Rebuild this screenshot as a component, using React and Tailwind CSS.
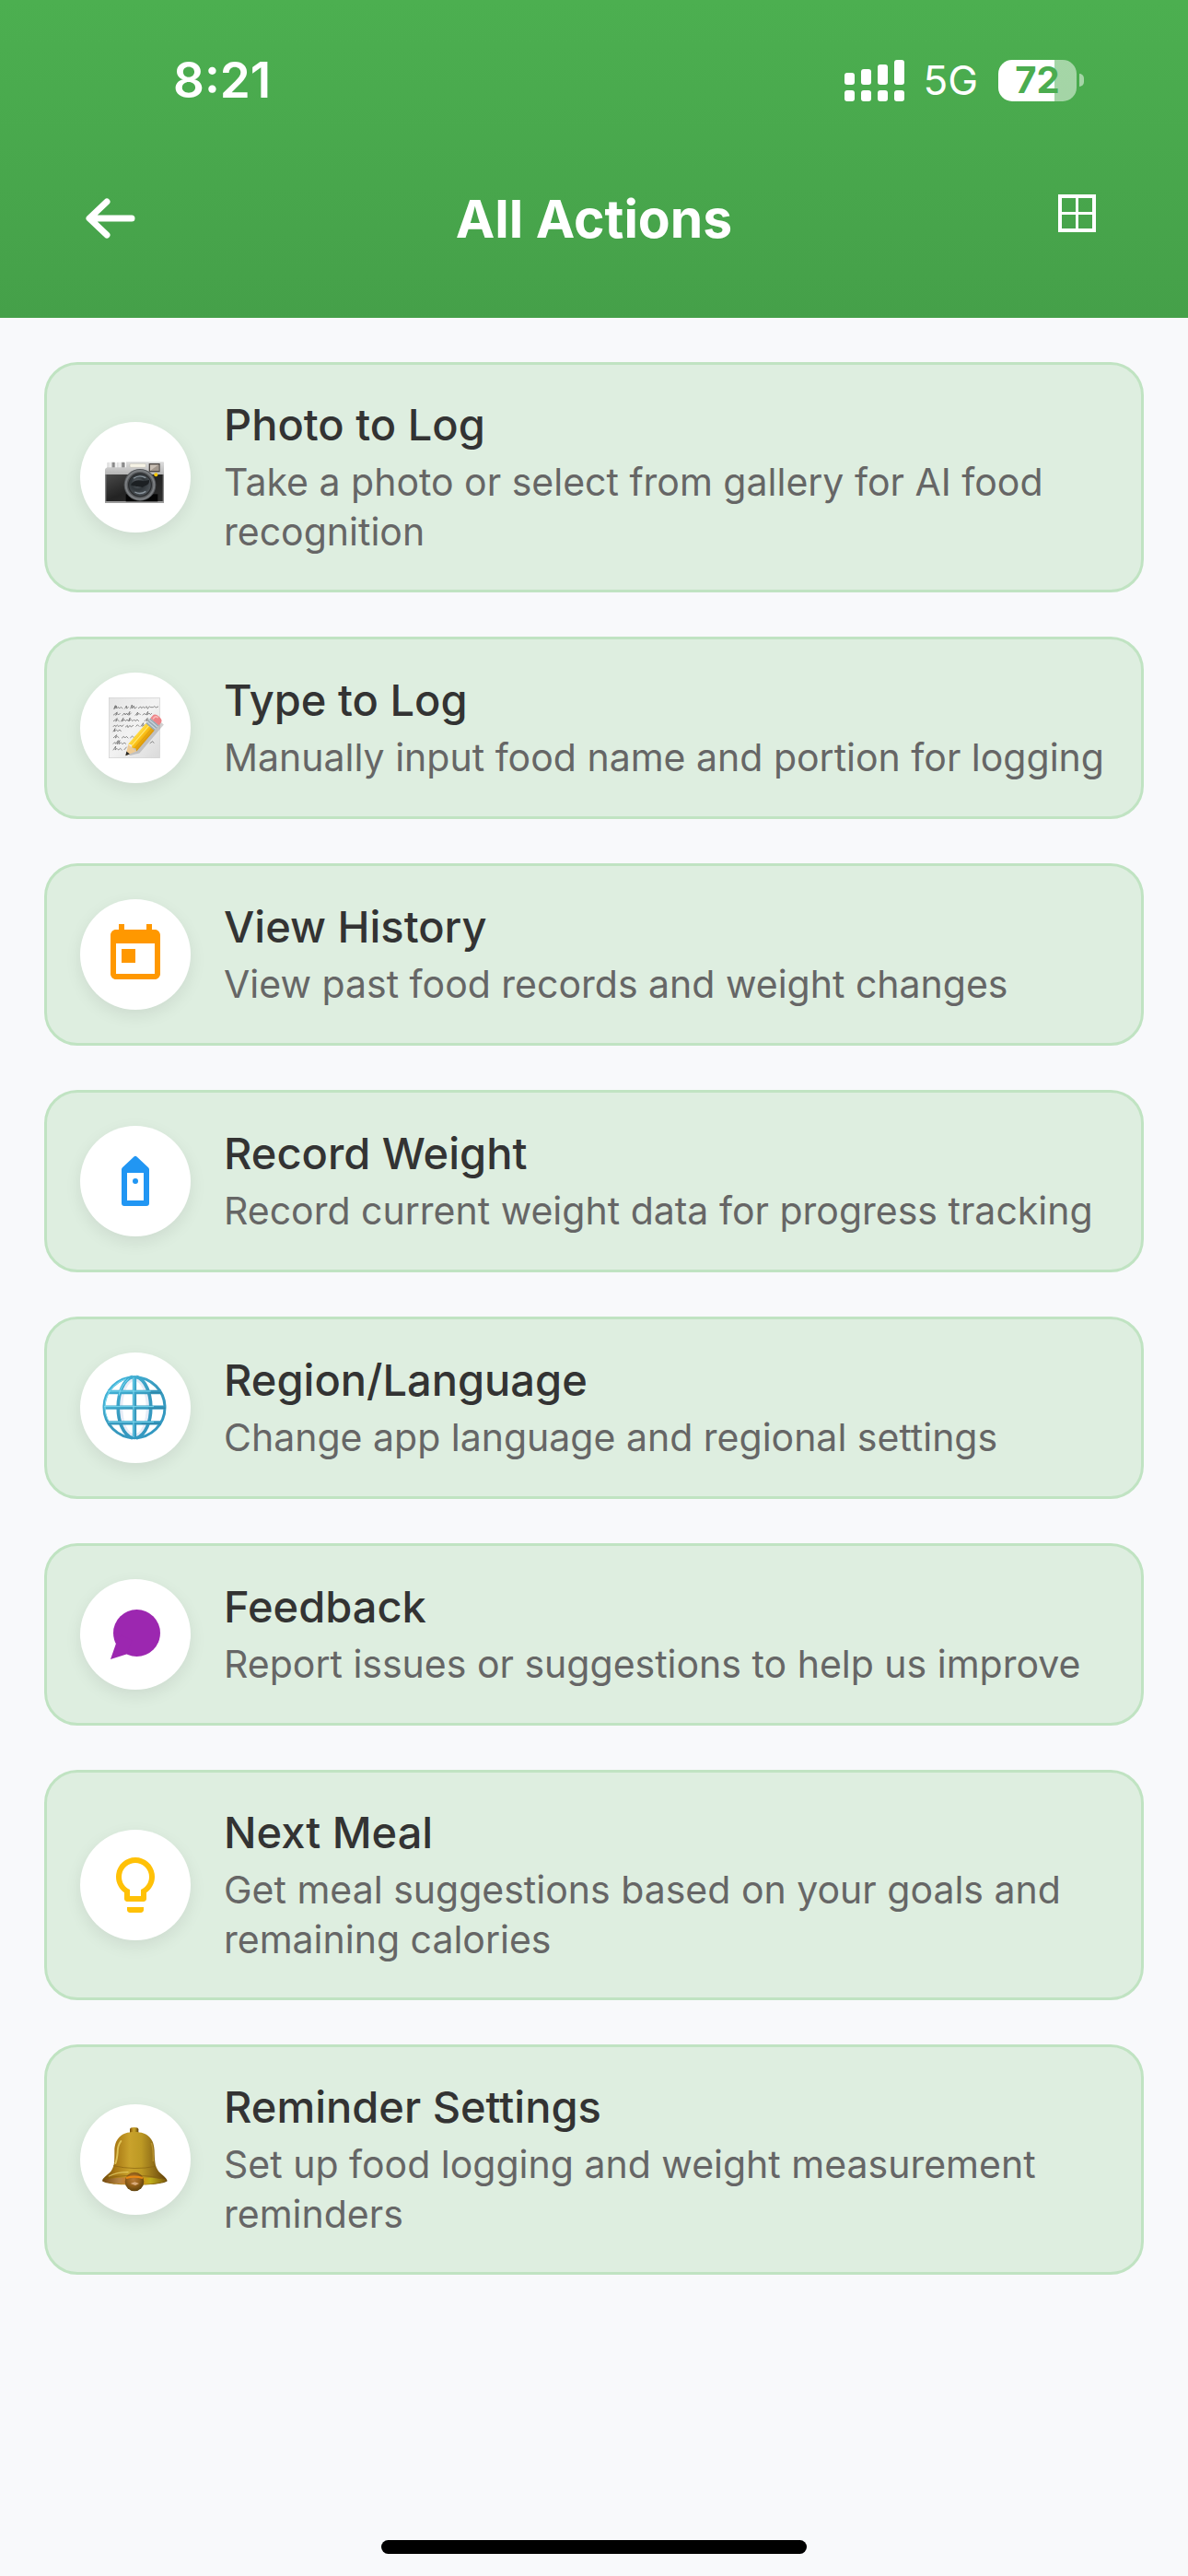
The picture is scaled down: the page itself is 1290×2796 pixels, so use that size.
import React from 'react';

const CameraIcon = () => (
  <svg viewBox="0 0 360 360" className="w-full h-full" aria-hidden="true">
    <defs>
      <linearGradient id="camTop" x1="0" y1="0" x2="0" y2="1">
        <stop offset="0" stopColor="#dcdcdc" />
        <stop offset="1" stopColor="#b4b4b4" />
      </linearGradient>
      <linearGradient id="camKnob" x1="0" y1="0" x2="1" y2="0">
        <stop offset="0" stopColor="#d8d8d8" />
        <stop offset="0.45" stopColor="#f4f4f4" />
        <stop offset="0.75" stopColor="#777" />
        <stop offset="1" stopColor="#c8c8c8" />
      </linearGradient>
      <linearGradient id="camBody" x1="0" y1="0" x2="1" y2="1">
        <stop offset="0" stopColor="#4a4a4a" />
        <stop offset="0.5" stopColor="#232323" />
        <stop offset="1" stopColor="#2f2f2f" />
      </linearGradient>
      <radialGradient id="camLens" cx="0.4" cy="0.4" r="0.6">
        <stop offset="0" stopColor="#6c7278" />
        <stop offset="0.5" stopColor="#30363a" />
        <stop offset="1" stopColor="#4d5358" />
      </radialGradient>
    </defs>
    <rect x="88" y="131" width="27" height="20" rx="3" fill="url(#camKnob)" />
    <rect x="119" y="131" width="28" height="20" rx="3" fill="url(#camKnob)" />
    <path d="M82 152l6-4h62v-18h121q2 0 2 3v40H81v-17z" fill="url(#camTop)" />
    <rect x="81" y="171" width="192" height="88" fill="url(#camBody)" />
    <rect x="81" y="171" width="4" height="92" fill="#858585" />
    <rect x="269" y="171" width="4" height="92" fill="#858585" />
    <rect x="81" y="258" width="192" height="6" fill="#9b9b9b" />
    <rect x="149" y="235" width="104" height="24" fill="#050505" />
    <rect x="162" y="136" width="52" height="12" rx="4" fill="#f6f3e6" stroke="#aaa69a" strokeWidth="1" />
    <rect x="226" y="137" width="32" height="24" fill="#c9bfb5" stroke="#4d4744" strokeWidth="4" />
    <path d="M228 159l28-20v20z" fill="#a2978d" />
    <circle cx="195" cy="205" r="52" fill="#55585b" />
    <circle cx="195" cy="205" r="46" fill="none" stroke="#7b7e81" strokeWidth="6" />
    <circle cx="195" cy="205" r="37" fill="url(#camLens)" stroke="#2b2d2f" strokeWidth="4" />
    <path d="M165 205c8-16 26-18 42-12l18-4c2 16-10 16-22 24-16-4-26 0-38-8z" fill="#1c2023" />
    <path d="M174 184q18-14 40-2M178 228q18 10 36-2" fill="none" stroke="#8b959d" strokeWidth="4" />
    <circle cx="247" cy="172" r="6" fill="#f7c600" />
  </svg>
);

const MemoIcon = () => (
  <svg viewBox="0 0 360 360" className="w-full h-full" aria-hidden="true">
    <defs>
      <linearGradient id="memoPaper" x1="0" y1="0" x2="1" y2="1">
        <stop offset="0" stopColor="#e5e5e5" />
        <stop offset="0.5" stopColor="#f2f2f2" />
        <stop offset="1" stopColor="#dadada" />
      </linearGradient>
      <linearGradient id="memoPencil" x1="0" y1="0" x2="1" y2="0">
        <stop offset="0" stopColor="#ffdc45" />
        <stop offset="0.5" stopColor="#fbbf15" />
        <stop offset="1" stopColor="#d99408" />
      </linearGradient>
    </defs>
    <rect x="94" y="82" width="165" height="196" fill="url(#memoPaper)" stroke="#d0d0d0" strokeWidth="2" />
    <g fill="none" stroke="#5a5a5a" strokeWidth="2" strokeLinecap="round" strokeLinejoin="round">
      <path d="M110 118l5-11-2 11 5-10 1 9 5-5 4 5 5-5 5 5M146 117l5-9 1 9 5-4M164 117l5-12 0 12 6-9 2 9 7-4M190 116l7-5 3 5 6-5 4 5 6-6 4 8 6-8 3 3h9l4-3 5 4 7-3" />
      <path d="M109 138l12-9-5 10 6-5 3 4 5-5M138 139l6-7 3 6 5-6 3 6 7-11-3 12 7-7M180 139l8-10-3 10 7-6 4 4M204 138l6-5 4 5 7-11-3 11 7-6 4 5 4-4" />
      <path d="M109 158l12-9-5 10 6-5 5 4M133 159l8-11-4 11 7-6 4 5 5-5 4 5 6-11-4 11 7-5 5 5 5-5 4 5 6-5 5 5M210 158l10-10-4 10 7-5 4 5" />
      <path d="M108 176l5-5 3 5 5-5 5 5 5-5 4 5 6-5M148 177l6-5 2 7 6-7 4 5 7-5M182 175l5-5 5 5M198 175l8-11-3 11 7-5" />
      <path d="M108 192l6-10-3 10 7-5 5 4 6-5 4 5" />
      <path d="M109 212l10-9-4 10 6-5 5 4M136 213l6-5 4 5 5-5 5 5M164 212l6-5 5 5 5-5" />
      <path d="M108 232l5-5 3 5 8-11-3 12 8-12-3 12 7-5 5 5 6-5 5 4M228 230l8-6 4 5" />
      <path d="M108 252l8-12-2 12 6-5 5 5 6-5 5 5M144 251l7-8" />
    </g>
    <g transform="translate(148 271) rotate(40.5)">
      <path d="M-9-38L4-12 24-40V-162L-8-162z" fill="#777" opacity="0.35" transform="translate(5 4)" />
      <path d="M0 0L-17-34H17z" fill="#efcb93" />
      <path d="M0 0L-7-13H7z" fill="#272727" />
      <path d="M-18-34V-125H18V-34L9-40 0-34-9-40z" fill="url(#memoPencil)" />
      <path d="M-6-38V-125" stroke="#ffe979" strokeWidth="3" />
      <path d="M7-38V-125" stroke="#d89511" strokeWidth="2" />
      <rect x="-18" y="-146" width="36" height="23" fill="#9aa9b2" />
      <path d="M-18-139H18M-18-130H18" stroke="#c9d6dd" strokeWidth="4" />
      <path d="M-18-146V-156Q-18-168 0-168T18-156V-146z" fill="#ed8387" />
      <path d="M-10-149V-157Q-8-163 0-163" fill="none" stroke="#f9b7b7" strokeWidth="5" />
    </g>
  </svg>
);

const CalendarIcon = () => (
  <svg viewBox="0 0 24 24" className="w-[72px] h-[72px]" fill="#ff9800" aria-hidden="true">
    <path d="M19 3h-1V1h-2v2H8V1H6v2H5c-1.11 0-1.99.9-1.99 2L3 19c0 1.1.89 2 2 2h14c1.1 0 2-.9 2-2V5c0-1.1-.9-2-2-2zm0 16H5V8h14v11zM7 10h5v5H7z" />
  </svg>
);

const WeightIcon = () => (
  <svg viewBox="0 0 24 24" className="w-[72px] h-[72px]" fill="#2196f3" aria-hidden="true">
    <path
      fillRule="evenodd"
      d="M11.4 3.25a.85.85 0 0 1 1.2 0L16.7 7.1q.3.3.3.7V20q0 1-1 1H8q-1 0-1-1V7.8q0-.4.3-.7zM9 9v10h6V9z"
    />
    <circle cx="12" cy="12" r="1" />
  </svg>
);

const GlobeIcon = () => (
  <svg viewBox="0 0 360 360" className="w-full h-full" aria-hidden="true">
    <defs>
      <linearGradient id="globeLine" gradientUnits="userSpaceOnUse" x1="90" y1="80" x2="250" y2="280">
        <stop offset="0" stopColor="#45bbe0" />
        <stop offset="0.5" stopColor="#3899bd" />
        <stop offset="1" stopColor="#3198c2" />
      </linearGradient>
    </defs>
    <ellipse cx="177" cy="179" rx="50" ry="99" fill="#e6ecf6" />
    <ellipse cx="177" cy="179" rx="38" ry="86" fill="#ffffff" />
    <g fill="none" stroke="url(#globeLine)">
      <circle cx="177" cy="179" r="99" strokeWidth="9" />
      <path d="M171 79C108 100 108 258 171 279M183 79C246 100 246 258 183 279" strokeWidth="11" />
      <path d="M177 76V282" strokeWidth="13" />
      <path d="M76 179H278M90 129H264M90 229H264" strokeWidth="13" />
    </g>
    <g fill="none" stroke="#7fdcf2" strokeWidth="3">
      <path d="M174 82V276M78 176H240M90 126H230M91 226H240" />
      <path d="M91 220A95 95 0 0 1 150 86M126 140Q132 108 158 86" />
    </g>
    <path d="M227 131H266M200 232H262M222 181H278" stroke="#287a99" strokeWidth="4" opacity="0.6" />
  </svg>
);

const FeedbackIcon = () => (
  <svg viewBox="0 0 24 24" className="w-[72px] h-[72px]" fill="#9c27b0" aria-hidden="true">
    <circle cx="12.5" cy="11.5" r="8.5" />
    <path d="M4.95 15.4L3 21l5.8-1.8 2-5-4-2z" />
  </svg>
);

const BulbIcon = () => (
  <svg viewBox="0 0 24 24" className="w-[72px] h-[72px]" fill="#ffc107" aria-hidden="true">
    <path d="M9 21c0 .55.45 1 1 1h4c.55 0 1-.45 1-1v-1H9v1zm3-19C8.14 2 5 5.14 5 9c0 2.38 1.19 4.47 3 5.74V17c0 .55.45 1 1 1h6c.55 0 1-.45 1-1v-2.26c1.81-1.27 3-3.36 3-5.74 0-3.86-3.14-7-7-7zm2 11.7V16h-4v-2.3C8.2 12.8 7 11.2 7 9c0-2.76 2.24-5 5-5s5 2.24 5 5c0 2.2-1.2 3.8-3 4.7z" />
  </svg>
);

const BellIcon = () => (
  <svg viewBox="0 0 360 360" className="w-full h-full" aria-hidden="true">
    <defs>
      <linearGradient id="bellBody" x1="0" y1="0" x2="1" y2="0">
        <stop offset="0" stopColor="#6b480a" />
        <stop offset="0.2" stopColor="#a87814" />
        <stop offset="0.42" stopColor="#c9a22c" />
        <stop offset="0.6" stopColor="#bd9924" />
        <stop offset="0.85" stopColor="#836114" />
        <stop offset="1" stopColor="#5f3f06" />
      </linearGradient>
      <linearGradient id="bellInside" x1="0" y1="0" x2="1" y2="0">
        <stop offset="0" stopColor="#7a4c12" />
        <stop offset="0.25" stopColor="#b58545" />
        <stop offset="0.5" stopColor="#e07a10" />
        <stop offset="0.75" stopColor="#bfae1a" />
        <stop offset="1" stopColor="#7d5a0c" />
      </linearGradient>
      <radialGradient id="bellClapper" cx="0.45" cy="0.4" r="0.6">
        <stop offset="0" stopColor="#b87b38" />
        <stop offset="0.5" stopColor="#99641c" />
        <stop offset="1" stopColor="#5f420c" />
      </radialGradient>
    </defs>
    <path d="M162 96V82q0-7 14-7t14 7v14z" fill="url(#bellBody)" />
    <path
      d="M177 90c46 0 64 26 65 60 1 38 2 48 10 62 8 16 30 24 32 38-18 18-194 18-212 0 2-14 24-22 32-38 8-14 8-24 8-62 1-34 19-60 65-60z"
      fill="url(#bellBody)"
    />
    <ellipse cx="178" cy="249" rx="102" ry="11" fill="url(#bellInside)" />
    <path d="M108 200q70 16 138 2M74 244q40-12 104-12t102 14" fill="none" stroke="#886311" strokeWidth="3" opacity="0.7" />
    <path d="M133 120q-11 14-11 36-2 24-7 36" fill="none" stroke="#f4df72" strokeWidth="6" strokeLinecap="round" opacity="0.7" />
    <path d="M94 234q26-13 62-13" fill="none" stroke="#f7e681" strokeWidth="4" strokeLinecap="round" opacity="0.6" />
    <path d="M232 126q7 18 6 60" fill="none" stroke="#c9a239" strokeWidth="4" opacity="0.7" />
    <circle cx="177" cy="252" r="31" fill="url(#bellClapper)" />
    <path d="M150 240q26-8 54 0" fill="none" stroke="#e98813" strokeWidth="7" />
    <path d="M164 258l14-5 14 5-12 6z" fill="#d9ab7c" />
  </svg>
);

const actions = [
  {
    title: 'Photo to Log',
    description: 'Take a photo or select from gallery for AI food recognition',
    icon: CameraIcon
  },
  {
    title: 'Type to Log',
    description: 'Manually input food name and portion for logging',
    icon: MemoIcon
  },
  {
    title: 'View History',
    description: 'View past food records and weight changes',
    icon: CalendarIcon
  },
  {
    title: 'Record Weight',
    description: 'Record current weight data for progress tracking',
    icon: WeightIcon
  },
  {
    title: 'Region/Language',
    description: 'Change app language and regional settings',
    icon: GlobeIcon
  },
  {
    title: 'Feedback',
    description: 'Report issues or suggestions to help us improve',
    icon: FeedbackIcon
  },
  {
    title: 'Next Meal',
    description: 'Get meal suggestions based on your goals and remaining calories',
    icon: BulbIcon
  },
  {
    title: 'Reminder Settings',
    description: 'Set up food logging and weight measurement reminders',
    icon: BellIcon
  }
];

const StatusBar = () => (
  <div className="flex h-[174px] items-center justify-between pl-[188px] pr-[113px]">
    <span className="text-[53px] leading-none font-semibold">8:21</span>
    <div className="flex items-center">
      <svg viewBox="0 0 65 45" className="w-[65px] h-[45px]" fill="#fff" aria-hidden="true">
        <rect x="0" y="14" width="11" height="13" rx="3" />
        <rect x="18" y="10" width="11" height="17" rx="3" />
        <rect x="36" y="5" width="11" height="22" rx="3" />
        <rect x="54" y="0" width="11" height="27" rx="3" />
        <rect x="0" y="33" width="11" height="12" rx="3" />
        <rect x="18" y="33" width="11" height="12" rx="3" />
        <rect x="36" y="33" width="11" height="12" rx="3" />
        <rect x="54" y="33" width="11" height="12" rx="3" />
      </svg>
      <span className="ml-5 text-[44px] leading-[50px]">5G</span>
      <div className="ml-[22px] flex items-center gap-[3px]">
        <div className="flex h-[45px] w-[85px] items-center justify-center rounded-[15px] bg-linear-to-r from-white from-72% to-white/50 to-72%">
          <span className="text-[40px] leading-none font-bold text-[#4bac4f]">72</span>
        </div>
        <div className="h-[14px] w-[5px] rounded-r-full bg-white/50" />
      </div>
    </div>
  </div>
);

const Header = () => (
  <header className="bg-linear-to-b from-[#4caf50] to-[#45a049] pb-[45px] text-white">
    <StatusBar />
    <div className="flex h-[126px] items-center justify-between px-[60px]">
      <button type="button" aria-label="Back" className="flex h-[120px] w-[120px] items-center justify-center">
        <svg viewBox="0 0 54 44" className="h-[44px] w-[54px]" fill="none" stroke="#fff" strokeWidth="7" strokeLinecap="round" strokeLinejoin="round" aria-hidden="true">
          <path d="M50 22H5M23 4L4 22l19 18" />
        </svg>
      </button>
      <h1 className="text-[57px] leading-none font-bold">All Actions</h1>
      <button type="button" aria-label="Grid view" className="flex h-[120px] w-[120px] items-start justify-center pt-[34px]">
        <svg viewBox="0 0 41 41" className="h-[41px] w-[41px]" fill="none" stroke="#fff" aria-hidden="true">
          <path d="M2 2h37v37H2z" strokeWidth="4" />
          <path d="M20.5 2v37M2 20.5h37" strokeWidth="3" />
        </svg>
      </button>
    </div>
  </header>
);

const ActionCard = ({ title, description, icon: Icon }) => (
  <button
    type="button"
    className="flex w-full items-center gap-9 rounded-[36px] border-3 border-[#c0e3c2] bg-[#deeee0] p-9 text-left"
  >
    <span className="flex h-[120px] w-[120px] shrink-0 items-center justify-center rounded-full bg-white shadow-[0_6px_18px_rgba(0,0,0,0.08)]">
      <Icon />
    </span>
    <span className="flex min-w-0 flex-1 flex-col gap-[6px]">
      <span className="text-[47px] leading-[58px] font-medium text-[#333]">{title}</span>
      <span className="text-[41px] leading-[54px] text-[#666]">{description}</span>
    </span>
  </button>
);

const App = () => {
  return (
    <div className="flex min-h-screen flex-col bg-[#f8f9fb] font-['Inter',sans-serif]">
      <Header />
      <main className="flex flex-col gap-12 p-12">
        {actions.map((action) => (
          <ActionCard key={action.title} {...action} />
        ))}
      </main>
      <div className="mt-auto flex justify-center pb-6">
        <div className="h-[15px] w-[462px] rounded-full bg-black" />
      </div>
    </div>
  );
};

export default App;
